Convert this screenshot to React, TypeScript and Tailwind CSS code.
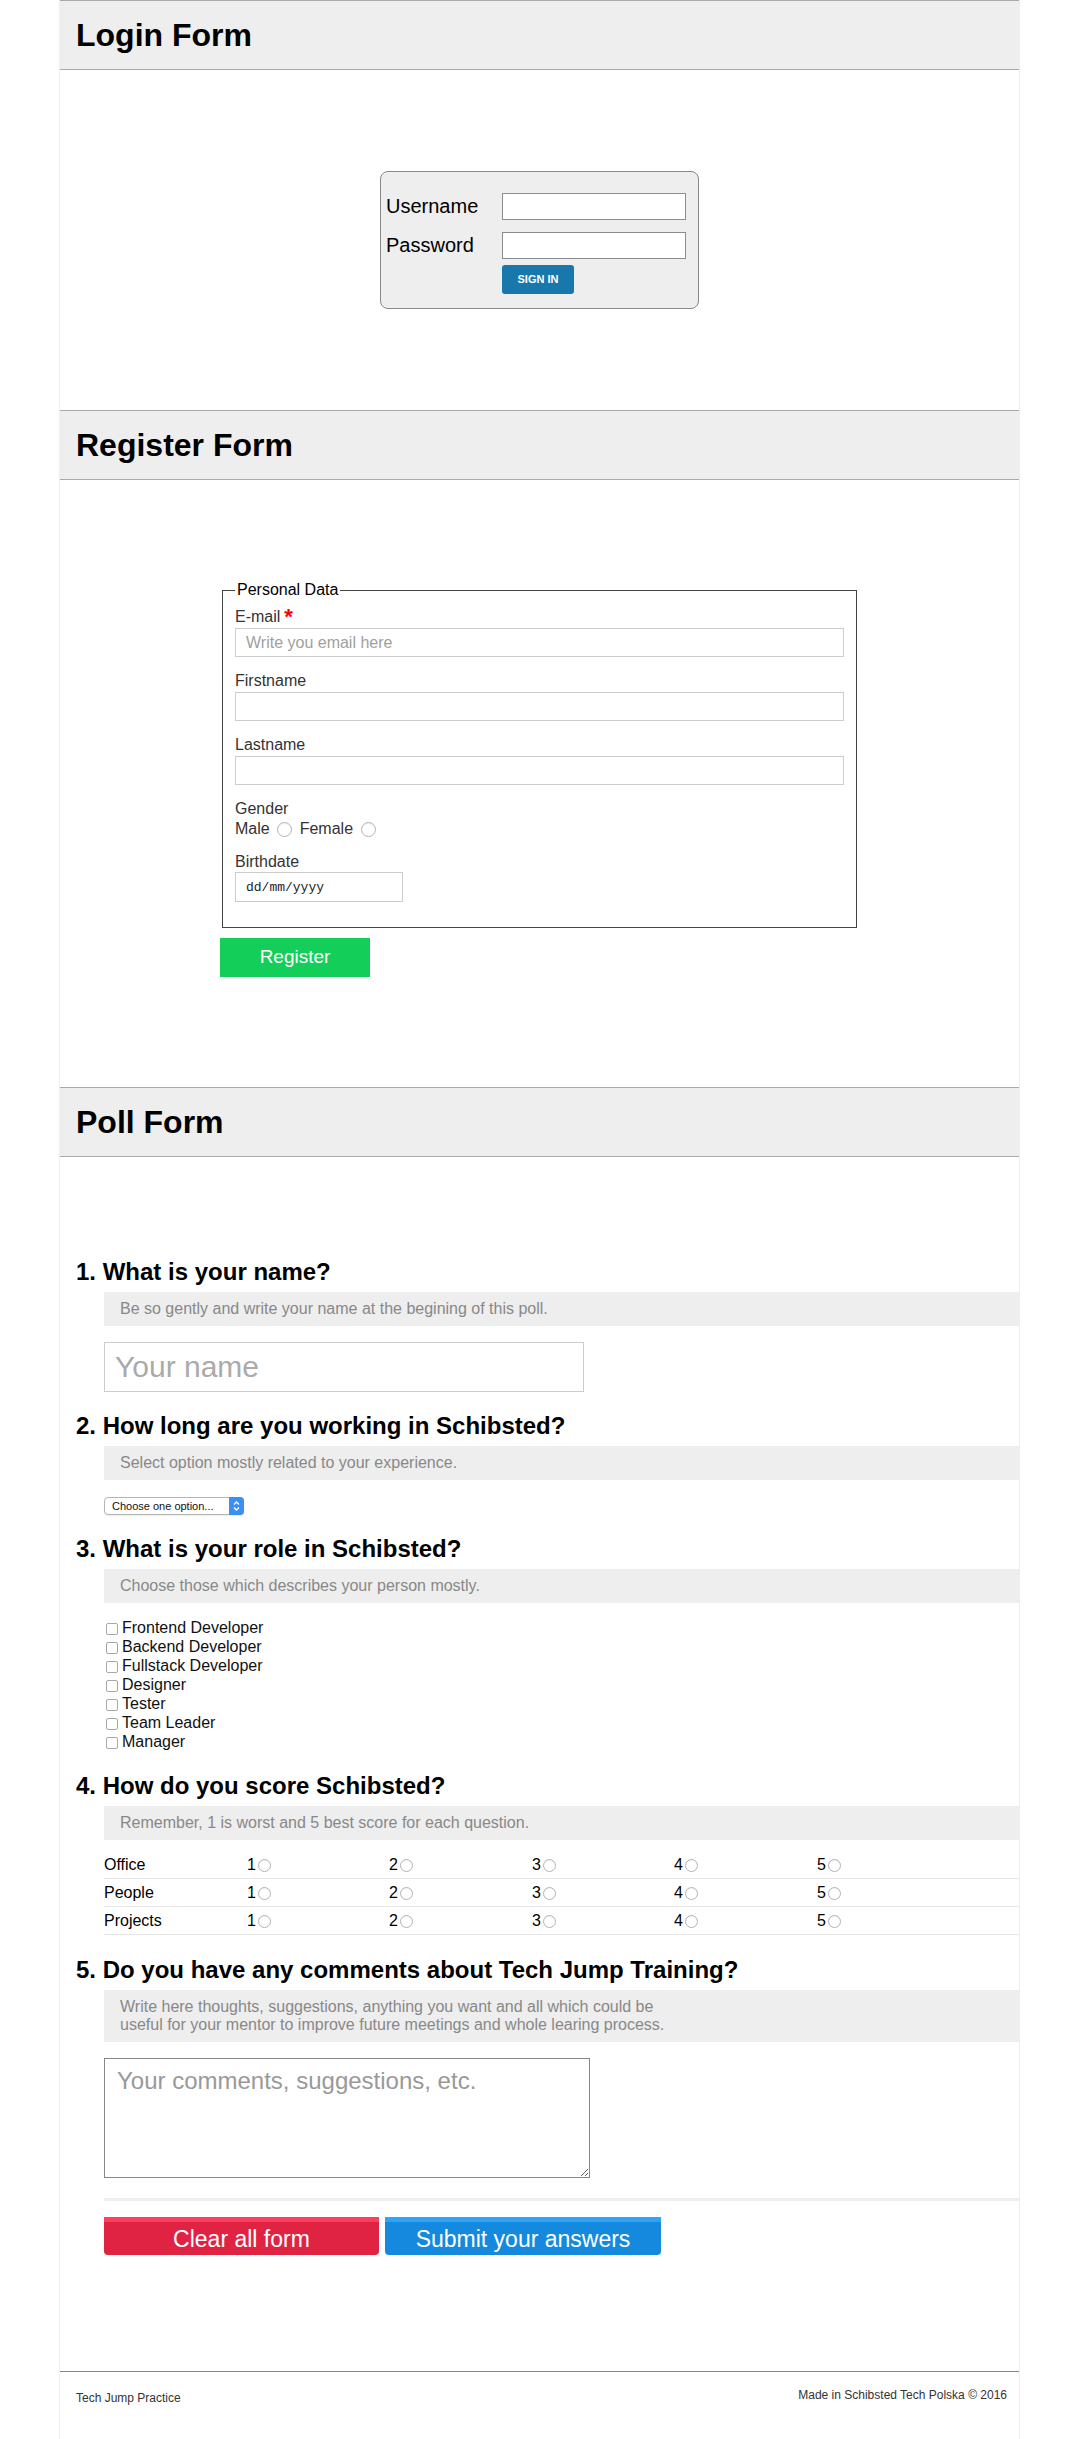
import React from "react";

const roles = [
  "Frontend Developer",
  "Backend Developer",
  "Fullstack Developer",
  "Designer",
  "Tester",
  "Team Leader",
  "Manager",
];

const scoreRows = ["Office", "People", "Projects"];

function SectionHeader({ title }: { title: string }) {
  return (
    <header className="flex h-[70px] items-center border-y border-[#aaa] bg-[#eee] px-4">
      <h1 className="text-[32px] font-bold leading-none text-black">{title}</h1>
    </header>
  );
}

function Question({ num, title, className = "" }: { num: number; title: string; className?: string }) {
  return (
    <h2 className={`pl-4 text-[24px] font-bold leading-[28px] text-black ${className}`}>
      {num}. {title}
    </h2>
  );
}

function Help({ children }: { children: React.ReactNode }) {
  return (
    <p className="ml-[44px] mt-[6px] bg-[#eee] px-4 py-2 text-[16px] leading-[18px] text-[#888]">{children}</p>
  );
}

function Radio({ size = 13 }: { size?: number }) {
  return (
    <input
      type="radio"
      className={`appearance-none rounded-full border border-[#b3b3b3] bg-white shadow-[inset_0_1px_1px_rgba(0,0,0,0.06)] ${
        size === 13 ? "h-[13px] w-[13px]" : "h-[15px] w-[15px]"
      }`}
    />
  );
}

function LoginForm() {
  return (
    <section>
      <SectionHeader title="Login Form" />
      <div className="py-[101px]">
        <form className="mx-auto grid h-[138px] w-[319px] grid-cols-[116px_184px] content-start items-center rounded-[8px] border border-[#888] bg-[#eee] pl-[5px] pt-[21px]">
          <label className="text-[20px] leading-[27px] text-black">Username</label>
          <input type="text" className="h-[27px] w-[184px] border border-[#8c8c8c] bg-white" />
          <label className="mt-[12px] text-[20px] leading-[27px] text-black">Password</label>
          <input type="password" className="mt-[12px] h-[27px] w-[184px] border border-[#8c8c8c] bg-white" />
          <span />
          <button
            type="button"
            className="mt-[6px] h-[29px] w-[72px] rounded-[3px] bg-[#1878ab] text-[11px] font-bold text-white"
          >
            SIGN IN
          </button>
        </form>
      </div>
    </section>
  );
}

function RegisterForm() {
  const field = "block h-[29px] w-full border border-[#ccc] bg-white px-[10px] text-[16px] outline-none";
  return (
    <section>
      <SectionHeader title="Register Form" />
      <div className="pb-[110px] pt-[101px]">
        <form className="mx-auto w-[639px]">
          <fieldset className="mx-[2px] border border-[#444] px-3 pb-[10px] pt-[9px]">
            <legend className="px-[2px] text-[16px] leading-[18px] text-black">Personal Data</legend>
            <div className="mb-[15px]">
              <label className="block text-[16px] leading-[18px] text-[#333]">
                E-mail
                <span className="relative top-[2px] ml-[4px] text-[22px] font-bold leading-[0] text-[#f00]">*</span>
              </label>
              <input type="email" placeholder="Write you email here" className={`mt-[2px] ${field} placeholder:text-[#a0a0a0]`} />
            </div>
            <div className="mb-[15px]">
              <label className="block text-[16px] leading-[18px] text-[#333]">Firstname</label>
              <input type="text" className={`mt-[2px] ${field}`} />
            </div>
            <div className="mb-[15px]">
              <label className="block text-[16px] leading-[18px] text-[#333]">Lastname</label>
              <input type="text" className={`mt-[2px] ${field}`} />
            </div>
            <div className="mb-[15px]">
              <div className="text-[16px] leading-[18px] text-[#333]">Gender</div>
              <div className="mt-[2px] flex h-[18px] items-center text-[16px] text-[#333]">
                <span>Male</span>
                <span className="ml-[7px] flex">
                  <Radio size={15} />
                </span>
                <span className="ml-[8px]">Female</span>
                <span className="ml-[8px] flex">
                  <Radio size={15} />
                </span>
              </div>
            </div>
            <div className="mb-[15px]">
              <label className="block text-[16px] leading-[18px] text-[#333]">Birthdate</label>
              <input
                type="text"
                placeholder="dd/mm/yyyy"
                className="mt-[1px] block h-[30px] w-[168px] border border-[#ccc] bg-white px-[10px] font-['Liberation_Mono',monospace] text-[13px] placeholder:text-[#222]"
              />
            </div>
          </fieldset>
          <button type="button" className="mt-[10px] h-[39px] w-[150px] bg-[#13ce58] text-[19px] text-white">
            Register
          </button>
        </form>
      </div>
    </section>
  );
}

function PollForm() {
  return (
    <section>
      <SectionHeader title="Poll Form" />
      <form className="pb-[116px] pt-[101px]">
        <Question num={1} title="What is your name?" />
        <Help>Be so gently and write your name at the begining of this poll.</Help>
        <input
          type="text"
          placeholder="Your name"
          className="ml-[44px] mt-[16px] block h-[50px] w-[480px] border border-[#ccc] px-[10px] text-[30px] placeholder:text-[#aaa]"
        />

        <Question num={2} title="How long are you working in Schibsted?" className="mt-[20px]" />
        <Help>Select option mostly related to your experience.</Help>
        <div className="relative ml-[44px] mt-[17px] flex h-[18px] w-[140px] items-center rounded-[4px] border border-[#b5b5b5] bg-white shadow-[0_1px_1px_rgba(0,0,0,0.08)]">
          <select className="h-full w-full appearance-none bg-transparent pl-[7px] text-[11px] leading-[16px] text-[#111] outline-none">
            <option>Choose one option...</option>
          </select>
          <span className="pointer-events-none absolute bottom-[-1px] right-[-1px] top-[-1px] flex w-[15px] items-center justify-center rounded-r-[4px] bg-[#3a8ef4]">
            <svg width="7" height="12" viewBox="0 0 7 12" fill="none" stroke="white" strokeWidth="1.3">
              <path d="M1 4.5 L3.5 2 L6 4.5" />
              <path d="M1 7.5 L3.5 10 L6 7.5" />
            </svg>
          </span>
        </div>

        <Question num={3} title="What is your role in Schibsted?" className="mt-[20px]" />
        <Help>Choose those which describes your person mostly.</Help>
        <div className="ml-[44px] mt-[15px]">
          {roles.map((r) => (
            <label key={r} className="flex h-[19px] items-start text-[16px] leading-[19px] text-[#111]">
              <input
                type="checkbox"
                className="ml-[2px] mr-[4px] mt-[5px] h-[12px] w-[12px] appearance-none rounded-[2px] border border-[#a8a8a8] bg-white"
              />
              {r}
            </label>
          ))}
        </div>

        <Question num={4} title="How do you score Schibsted?" className="mt-[21px]" />
        <Help>Remember, 1 is worst and 5 best score for each question.</Help>
        <div className="ml-[44px] mt-[11px]">
          {scoreRows.map((row) => (
            <div
              key={row}
              className="grid h-[28px] grid-cols-[143px_142px_143px_142px_143px_142px] items-center border-b border-[#e8e8e8] text-[16px] text-black"
            >
              <span>{row}</span>
              {[1, 2, 3, 4, 5].map((n) => (
                <span key={n} className="flex items-center">
                  {n}
                  <span className="ml-[2px] mt-[2px] flex">
                    <Radio />
                  </span>
                </span>
              ))}
            </div>
          ))}
        </div>

        <Question num={5} title="Do you have any comments about Tech Jump Training?" className="mt-[21px]" />
        <Help>
          Write here thoughts, suggestions, anything you want and all which could be
          <br />
          useful for your mentor to improve future meetings and whole learing process.
        </Help>
        <textarea
          placeholder="Your comments, suggestions, etc."
          className="ml-[44px] mt-[16px] block h-[120px] w-[486px] border border-[#888] px-[12px] pt-[8px] text-[24px] leading-[28px] placeholder:text-[#999]"
        />
        <div className="ml-[44px] mt-[20px] h-[3px] bg-[#eee]" />
        <div className="ml-[44px] mt-[16px] flex gap-[6px]">
          <button
            type="reset"
            className="h-[38px] w-[275px] rounded-b-[4px] border-t-[5px] border-[#ff3d5c] bg-[#e02343] text-[23px] text-white"
          >
            Clear all form
          </button>
          <button
            type="button"
            className="h-[38px] w-[276px] rounded-b-[4px] border-t-[5px] border-[#2fa6f5] bg-[#1589dd] text-[23px] text-white"
          >
            Submit your answers
          </button>
        </div>
      </form>
    </section>
  );
}

export default function App() {
  return (
    <div className="min-h-screen bg-white font-['Liberation_Sans',Arial,sans-serif]">
      <div className="mx-auto flex min-h-screen w-[961px] flex-col border-x border-[#eee]">
        <LoginForm />
        <RegisterForm />
        <PollForm />
        <footer className="flex items-start justify-between border-t border-[#888] pb-[40px] pl-4 pr-[12px] pt-[16px] text-[12px] leading-[14px] text-[#333]">
          <span className="mt-[3px]">Tech Jump Practice</span>
          <span>Made in Schibsted Tech Polska © 2016</span>
        </footer>
      </div>
    </div>
  );
}
